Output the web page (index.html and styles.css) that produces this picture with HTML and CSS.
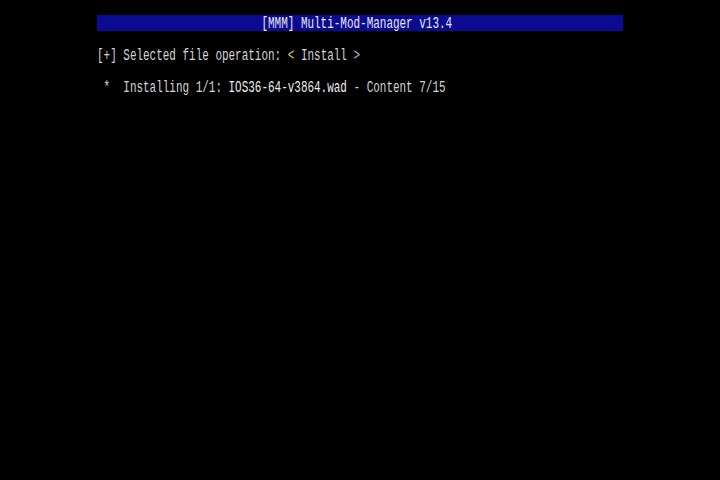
FILE: index.html
```html
<!DOCTYPE html>
<html>
<head>
<meta charset="utf-8">
<link rel="stylesheet" href="styles.css">
</head>
<body>
<div class="screen">
  <div class="console">
    <div class="row banner">                         [MMM] Multi-Mod-Manager v13.4</div>
    <div class="row"> </div>
    <div class="row">[+] Selected file operation: <span class="arrow-l">&lt;</span> Install <span class="arrow-r">&gt;</span></div>
    <div class="row"> </div>
    <div class="row"> *  Installing 1/1: <span class="bright">IOS36-64-v3864.wad</span> - Content 7/15</div>
  </div>
</div>
</body>
</html>
```

FILE: styles.css
```css
html, body {
  margin: 0;
  padding: 0;
  background: #000;
  width: 720px;
  height: 480px;
  overflow: hidden;
}

.screen {
  padding-top: 15px;
  padding-left: 97px;
}

.console {
  width: 768px;
  font-family: "Liberation Mono", "DejaVu Sans Mono", monospace;
  font-size: 16px;
  color: #d4d4d4;
  transform: scaleX(0.685);
  transform-origin: left top;
}

.row {
  height: 16px;
  line-height: 19px;
  white-space: pre;
}

.banner {
  background: #0b0b92;
  color: #e8e8f0;
}

.bright {
  color: #ececec;
}

.arrow-l {
  color: #e8c8a8;
}

.arrow-r {
  color: #a8c0f0;
}
```
